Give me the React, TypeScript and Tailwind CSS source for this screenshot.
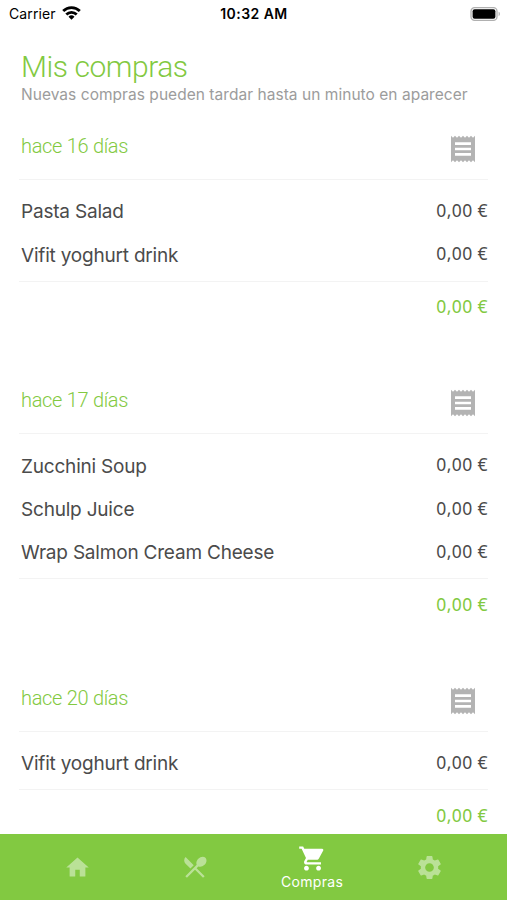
import { MdHome, MdReceipt, MdRestaurantMenu, MdSettings, MdShoppingCart } from 'react-icons/md';

interface Purchase {
  date: string;
  items: string[];
}

const purchases: Purchase[] = [
  { date: 'hace 16 días', items: ['Pasta Salad', 'Vifit yoghurt drink'] },
  { date: 'hace 17 días', items: ['Zucchini Soup', 'Schulp Juice', 'Wrap Salmon Cream Cheese'] },
  { date: 'hace 20 días', items: ['Vifit yoghurt drink'] },
];

const PRICE = '0,00 €';

function StatusBar() {
  return (
    <div className="grid h-[27px] shrink-0 grid-cols-3 items-center pl-[9px] pr-[6px] text-[14px] text-black">
      <div className="flex items-center gap-[6px]">
        <span className="tracking-[0.1px]">Carrier</span>
        <svg className="-mt-px" width="19" height="14" viewBox="0 0 19 14" fill="none" stroke="currentColor" strokeWidth="2.8">
          <path d="M1.2 5.1a11.8 11.8 0 0 1 16.6 0" />
          <path d="M4.3 8.5a7.4 7.4 0 0 1 10.4 0" />
          <path d="M9.5 13.8 6.5 10.8a4.3 4.3 0 0 1 6 0z" fill="currentColor" stroke="none" />
        </svg>
      </div>
      <div className="pr-[2px] text-center font-semibold tracking-[0.45px]">10:32 AM</div>
      <div className="flex justify-end">
        <svg width="31" height="14" viewBox="0 0 31 14">
          <rect x="1" y="0.7" width="26" height="12.6" rx="3.6" fill="white" stroke="#b0b0b0" strokeWidth="1.3" />
          <rect x="2.6" y="2.3" width="22.8" height="9.4" rx="2" fill="black" />
          <path d="M28.6 4.8c1.7.6 1.7 3.8 0 4.4z" fill="#b0b0b0" />
        </svg>
      </div>
    </div>
  );
}

function PurchaseSection({ purchase }: { purchase: Purchase }) {
  return (
    <section className="shrink-0 pb-[33.8px]">
      <div className="flex h-[68px] items-center justify-between border-b border-[#f3f3f3] pr-[9px]">
        <h2 className="pl-[2px] font-[Roboto] text-[20px] font-light tracking-[-0.3px] text-[#82c941]">
          {purchase.date}
        </h2>
        <MdReceipt className="mt-[6px] size-[32px] text-[#b3b3b3]" />
      </div>
      <ul className="border-b border-[#f3f3f3] pt-[10px] pb-[4px]">
        {purchase.items.map((item) => (
          <li key={item} className="flex h-[43.3px] items-center justify-between pl-[2px] text-[#4b4b4b]">
            <span className="mt-[2px] text-[19px] tracking-[-0.2px]">{item}</span>
            <span className="-mt-[3px] font-['Noto_Sans'] text-[17.5px] tracking-[0.4px]">{PRICE}</span>
          </li>
        ))}
      </ul>
      <div className="flex h-[51px] items-center justify-end pb-[2px] font-['Noto_Sans'] text-[17.5px] tracking-[0.4px] text-[#82c941]">
        {PRICE}
      </div>
    </section>
  );
}

function TabBar() {
  return (
    <nav className="grid h-[66px] shrink-0 grid-cols-4 items-center bg-[#82c941] px-[19px] text-white">
      <MdHome className="mx-auto size-[27px] opacity-45" />
      <MdRestaurantMenu className="mx-auto size-[28px] opacity-45" />
      <div className="flex flex-col items-center">
        <MdShoppingCart className="size-[29px]" />
        <span className="text-[14px] leading-[18px] tracking-[0.3px]">Compras</span>
      </div>
      <MdSettings className="mx-auto size-[29px] opacity-45" />
    </nav>
  );
}

export default function App() {
  return (
    <div className="flex h-[900px] w-[507px] flex-col overflow-hidden bg-white font-[Inter,sans-serif]">
      <StatusBar />
      <main className="flex min-h-0 flex-1 flex-col overflow-hidden px-[19px]">
        <header className="h-[85px] shrink-0 pt-[22px] pl-[2px]">
          <h1 className="font-[Roboto] text-[30px] leading-[36px] font-light tracking-[-0.45px] text-[#82c941]">
            Mis compras
          </h1>
          <p className="text-[15.5px] leading-[20px] tracking-[0.04px] text-[#9c9c9c]">
            Nuevas compras pueden tardar hasta un minuto en aparecer
          </p>
        </header>
        {purchases.map((purchase) => (
          <PurchaseSection key={purchase.date} purchase={purchase} />
        ))}
      </main>
      <TabBar />
    </div>
  );
}
